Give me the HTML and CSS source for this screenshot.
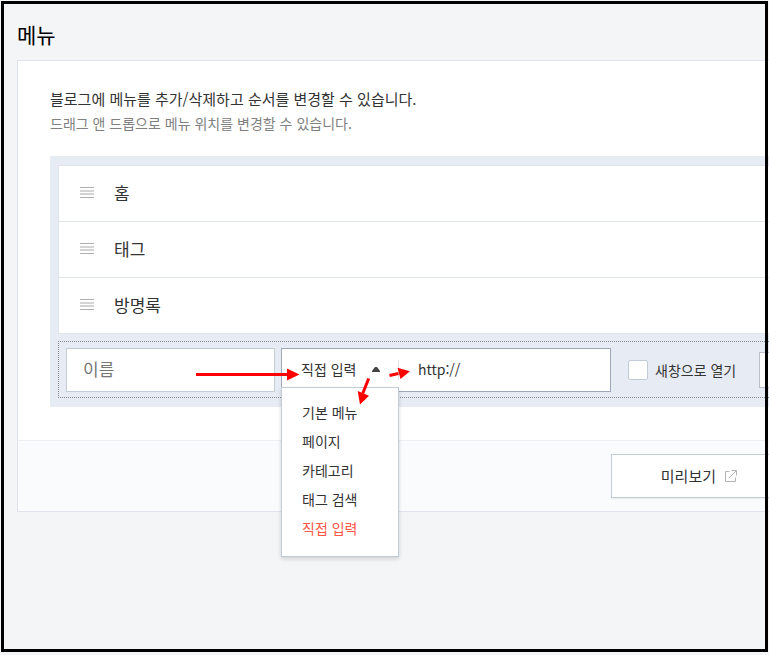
FILE: index.html
```html
<!DOCTYPE html>
<html lang="ko">
<head>
<meta charset="utf-8">
<title>메뉴</title>
<link rel="stylesheet" href="styles.css">
</head>
<body>
<main class="page">
  <h1 class="title">메뉴</h1>
  <section class="card">
    <div class="card-body">
      <p class="lead">블로그에 메뉴를 추가/삭제하고 순서를 변경할 수 있습니다.</p>
      <p class="hint">드래그 앤 드롭으로 메뉴 위치를 변경할 수 있습니다.</p>
      <div class="panel">
        <ul class="menu-list">
          <li class="menu-row"><svg class="handle" viewBox="0 0 14 11" aria-hidden="true"><path class="dark" d="M0 .5h14M0 10.5h14"/><path class="light" d="M0 3.5h14M0 4.5h14M0 6.5h14M0 7.5h14"/></svg>홈</li>
          <li class="menu-row"><svg class="handle" viewBox="0 0 14 11" aria-hidden="true"><path class="dark" d="M0 .5h14M0 10.5h14"/><path class="light" d="M0 3.5h14M0 4.5h14M0 6.5h14M0 7.5h14"/></svg>태그</li>
          <li class="menu-row"><svg class="handle" viewBox="0 0 14 11" aria-hidden="true"><path class="dark" d="M0 .5h14M0 10.5h14"/><path class="light" d="M0 3.5h14M0 4.5h14M0 6.5h14M0 7.5h14"/></svg>방명록</li>
        </ul>
        <form class="add-form">
          <input class="name-input" type="text" placeholder="이름" aria-label="이름">
          <div class="link-box">
            <button class="type-button" type="button" aria-haspopup="listbox" aria-expanded="true">직접 입력<svg class="caret" viewBox="0 0 8 5" aria-hidden="true"><path d="M3 0h2l3 4v1H0V4z"/></svg></button>
            <input class="url-input" type="text" value="http://" aria-label="URL">
            <ul class="options" role="listbox" aria-label="메뉴 종류">
              <li role="option">기본 메뉴</li>
              <li role="option">페이지</li>
              <li role="option">카테고리</li>
              <li role="option">태그 검색</li>
              <li role="option" class="selected" aria-selected="true">직접 입력</li>
            </ul>
          </div>
          <label class="check"><input class="check-box" type="checkbox">새창으로 열기</label>
          <button class="cancel-button" type="button" aria-label="취소"></button>
        </form>
      </div>
    </div>
    <footer class="card-footer">
      <button class="preview-button" type="button">미리보기<svg class="open-icon" viewBox="0 0 12 12" aria-hidden="true"><path d="M4.500 1.500H.5v10h10V7.500M4 8l7-7M6.500 .5h5v5"/></svg></button>
    </footer>
  </section>
</main>
<svg class="arrows" viewBox="0 0 220 50" aria-hidden="true">
  <path class="shaft" d="M0 19.500h95M172.700 23.500l-6 15M193.500 20.500l9-2"/>
  <path d="M91 13.500l12.500 6-12.500 6zM161.700 36l11.300 4.700-9 8.800zM201.500 12.700l12.500 3.500-9.500 7.800z"/>
</svg>
<div class="frame"></div>
</body>
</html>
```
FILE: styles.css
```css
* {
  box-sizing: border-box;
}

body {
  margin: 0;
  min-height: 100vh;
  background: #f3f5f7;
  color: #333;
  font: 14px/20px "Noto Sans CJK KR", "Noto Sans", sans-serif;
}

button,
input {
  margin: 0;
  font: inherit;
  color: inherit;
}

ul {
  margin: 0;
  padding: 0;
  list-style: none;
}

.page {
  padding: 18px 0 0 17px;
}

.title {
  margin: 0 0 10px;
  font-size: 21px;
  line-height: 32px;
  font-weight: 400;
  color: #000;
}

/* The card is flush with the right edge of the window. */
.card {
  background: #fff;
  border: 1px solid #dfe3eb;
  border-right: 0;
}

.card-body {
  padding: 26px 0 33px 32px;
}

.lead,
.hint {
  margin: 0;
  line-height: 24px;
}

.lead {
  font-size: 15px;
}

.hint {
  color: #808080;
}

.panel {
  margin-top: 21px;
  padding: 9px 0 9px 8px;
  background: #e7ecf4;
}

.menu-list {
  background: #fff;
  border: 1px solid #dfe3eb;
  border-width: 1px 0 0 1px;
}

.menu-row {
  display: flex;
  align-items: center;
  gap: 20px;
  height: 56px;
  padding: 0 0 2px 21px;
  border-bottom: 1px solid #e0e4eb;
  font-size: 17px;
}

.handle {
  width: 14px;
  height: 11px;
  fill: none;
}

.dark {
  stroke: #b0b0b0;
}

.light {
  stroke: #d4d4d4;
}

.add-form {
  display: flex;
  align-items: center;
  margin-top: 7px;
  padding: 6px 0 5px 7px;
  border: 1px dotted #7f879a;
  border-right: 0;
}

.name-input {
  flex: none;
  width: 209px;
  height: 44px;
  padding: 0 16px 4px;
  border: 1px solid #c3cbd6;
  background: #fff;
  font-size: 17px;
}

.name-input::placeholder {
  color: #777;
}

.link-box {
  position: relative;
  display: flex;
  align-items: center;
  flex: none;
  width: 330px;
  height: 44px;
  margin-left: 6px;
  border: 1px solid #a0a8b8;
  background: #fff;
}

.type-button {
  display: flex;
  align-items: center;
  justify-content: space-between;
  width: 117px;
  height: 20px;
  padding: 0 18px 2px 19px;
  border: 0;
  border-right: 1px solid #dfe3eb;
  background: none;
}

.caret {
  width: 8px;
  height: 5px;
  fill: #444;
}

.url-input {
  flex: 1;
  min-width: 0;
  padding: 0 19px 2px;
  border: 0;
  background: none;
}

.options {
  position: absolute;
  z-index: 1;
  top: 38px;
  left: -1px;
  width: 118px;
  padding: 10px 20px 13px;
  border: 1px solid #c3cbd6;
  background: #fff;
  box-shadow: 0 2px 4px rgba(0, 0, 0, 0.15);
  line-height: 29px;
}

.selected {
  color: #ff5544;
}

.check {
  display: flex;
  align-items: center;
  flex: none;
  gap: 7px;
  margin-left: 17px;
}

.check-box {
  appearance: none;
  width: 20px;
  height: 20px;
  border: 1px solid #c3cbd6;
  border-radius: 2px;
  background: #fff;
}

.cancel-button {
  flex: 1;
  min-width: 0;
  height: 36px;
  margin-left: 23px;
  padding: 0;
  border: 1px solid #b9c0cc;
  border-right: 0;
  background: #fff;
}

.card-footer {
  display: flex;
  justify-content: flex-end;
  padding: 13px 0;
  border-top: 1px solid #eceff4;
  background: #fafbfd;
}

.preview-button {
  display: flex;
  align-items: center;
  gap: 9px;
  height: 44px;
  padding: 0 32px 0 49px;
  border: 1px solid #c3cbd6;
  border-right: 0;
  background: #fff;
  box-shadow: 0 1px 1px rgba(0, 0, 0, 0.06);
  font-size: 15px;
}

.open-icon {
  width: 12px;
  height: 12px;
  fill: none;
  stroke: #b4b4b4;
}

/* Callout arrows laid over the form. */
.arrows {
  position: absolute;
  z-index: 2;
  top: 355px;
  left: 196px;
  width: 220px;
  height: 50px;
  fill: #f00;
  pointer-events: none;
}

.shaft {
  fill: none;
  stroke: #f00;
  stroke-width: 3;
}

.frame {
  position: fixed;
  z-index: 3;
  inset: 1px 1px 3px;
  border: 3px solid #000;
  pointer-events: none;
}
```
